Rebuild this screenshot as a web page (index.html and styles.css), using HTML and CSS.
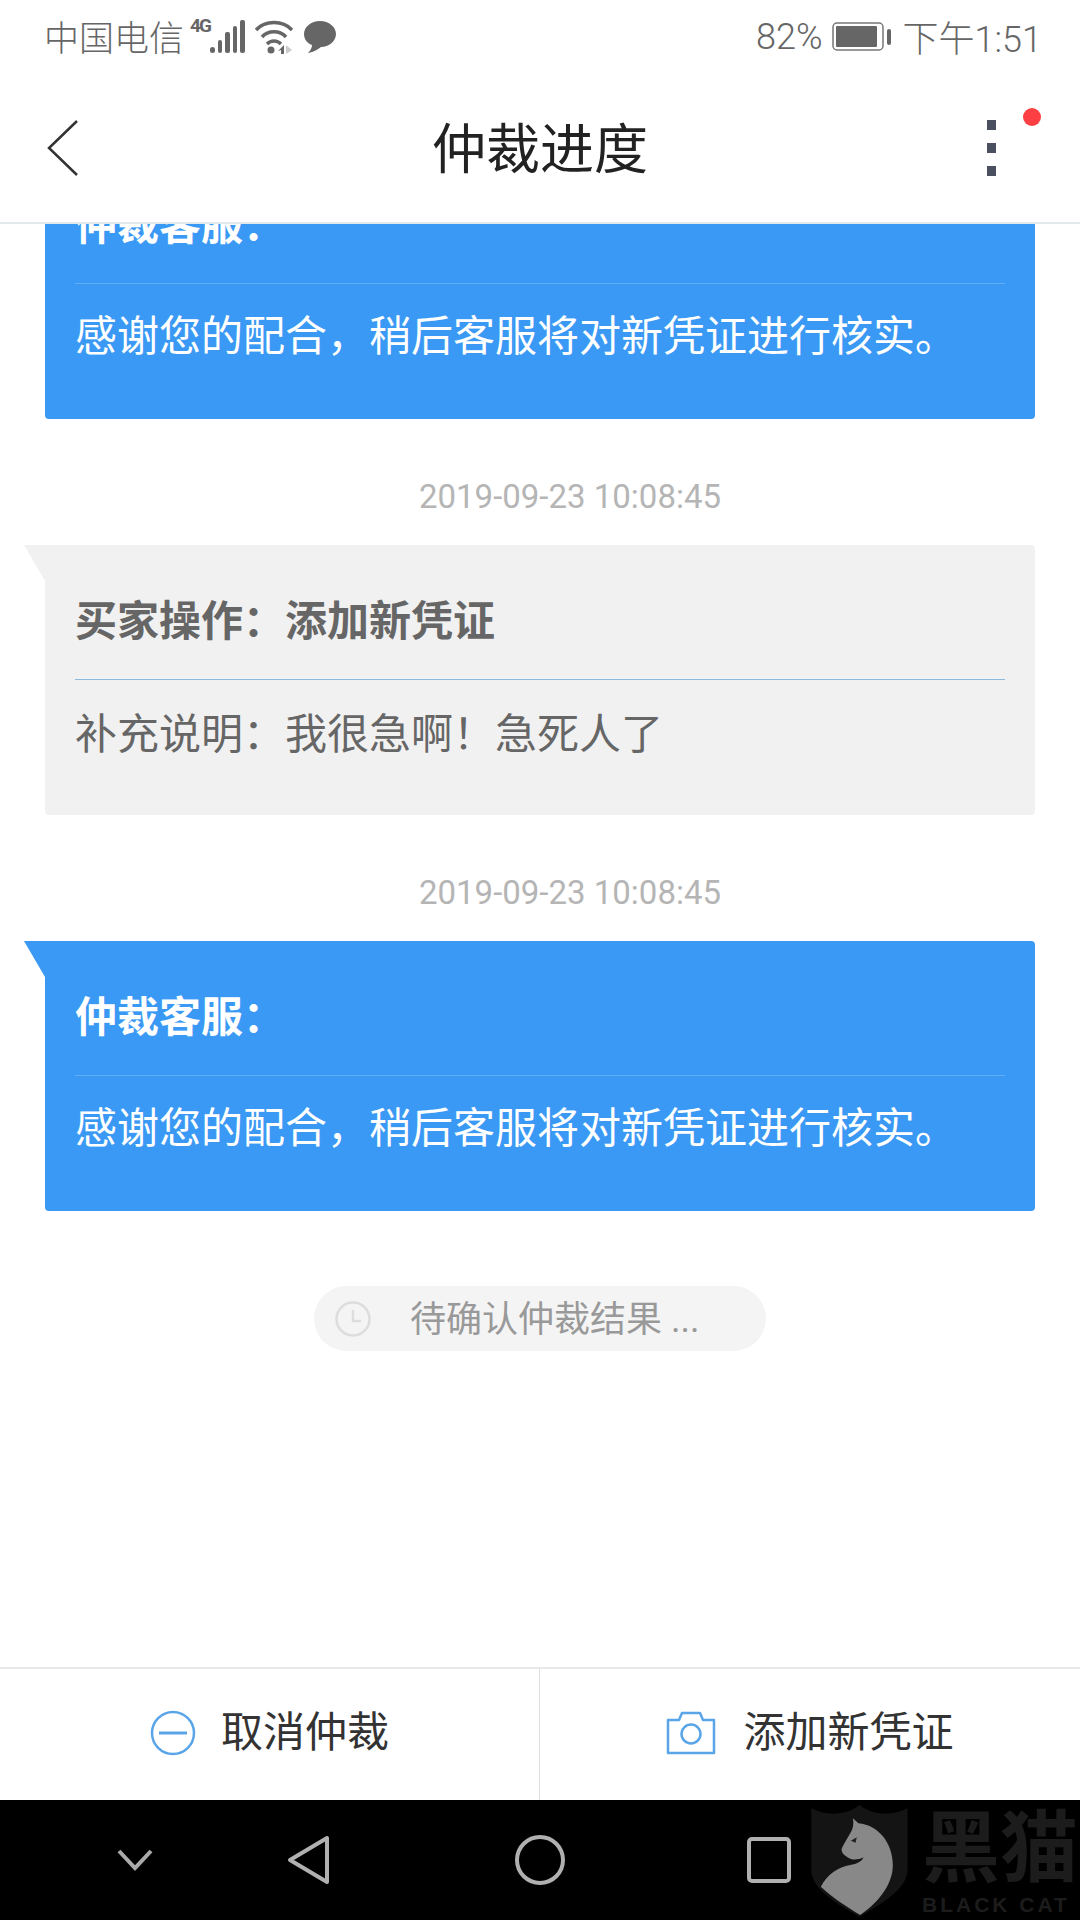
FILE: index.html
```html
<!DOCTYPE html>
<html lang="zh-CN">
<head>
    <meta charset="UTF-8">
    <title>仲裁进度</title>
    <link rel="stylesheet" href="styles.css">
</head>
<body>
    <div class="phone">
        <div class="status-bar">
            <span class="carrier">中国电信</span>
            <span class="net-type">4G</span>
            <svg class="signal" width="35" height="34" viewBox="0 0 35 34">
                <rect x="0" y="27" width="5" height="6" rx="2.5" fill="#666"/>
                <rect x="8" y="20" width="4" height="13" rx="2" fill="#666"/>
                <rect x="15" y="12" width="5" height="21" rx="2" fill="#666"/>
                <rect x="23" y="6" width="4" height="27" rx="2" fill="#666"/>
                <rect x="30" y="0" width="5" height="33" rx="2" fill="#666"/>
            </svg>
            <svg class="wifi" width="38" height="34" viewBox="0 0 38 34">
                <path d="M1 10C10 0 28 0 37 10" fill="none" stroke="#666" stroke-width="3.5"/>
                <path d="M7 17C13 10 25 10 31 17" fill="none" stroke="#666" stroke-width="3.5"/>
                <path d="M12 24C16 20 22 20 26 24" fill="none" stroke="#666" stroke-width="3.5"/>
                <circle cx="16" cy="30" r="3.5" fill="#666"/>
                <path d="M31 25L37 30L31 34Z" fill="#ccc"/>
                <path d="M29 25V34H26V30L23 31Z" fill="#666"/>
            </svg>
            <svg class="bubble" width="34" height="34" viewBox="0 0 34 34">
                <path d="M17 1C26 1 33 7 33 14C33 21 26 27 18 27C15 29 11 32 5 33C7 31 9 28 9 25C4 23 1 19 1 14C1 7 8 1 17 1Z" fill="#666"/>
            </svg>
            <span class="status-right">
                <span class="battery-text">82%</span>
                <svg class="battery" width="60" height="30" viewBox="0 0 60 30">
                    <rect x="1" y="1" width="50" height="27" rx="4" fill="none" stroke="#777" stroke-width="1.5"/>
                    <rect x="4" y="4" width="41" height="21" rx="1" fill="#666"/>
                    <rect x="55" y="7" width="4" height="16" rx="2" fill="#666"/>
                </svg>
                <span class="time">下午1:51</span>
            </span>
        </div>

        <div class="top-bar">
            <svg class="back" width="32" height="56" viewBox="0 0 32 56">
                <path d="M30 1L2 28L30 55" fill="none" stroke="#333" stroke-width="2.5"/>
            </svg>
            <h1 class="page-title">仲裁进度</h1>
            <div class="more">
                <i></i><i></i><i></i>
            </div>
            <span class="red-dot"></span>
        </div>

        <div class="timeline">
            <div class="card card-blue card-first">
                <div class="card-title">仲裁客服：</div>
                <div class="card-text">感谢您的配合，稍后客服将对新凭证进行核实。</div>
            </div>

            <div class="stamp">2019-09-23 10:08:45</div>
            <div class="card card-grey">
                <div class="card-title">买家操作：添加新凭证</div>
                <div class="card-text">补充说明：我很急啊！急死人了</div>
            </div>

            <div class="stamp">2019-09-23 10:08:45</div>
            <div class="card card-blue">
                <div class="card-title">仲裁客服：</div>
                <div class="card-text">感谢您的配合，稍后客服将对新凭证进行核实。</div>
            </div>

            <div class="pending">
                <svg class="clock" width="36" height="36" viewBox="0 0 36 36">
                    <circle cx="18" cy="18" r="16.5" fill="none" stroke="#ddd" stroke-width="2.5"/>
                    <path d="M18 9V20H26" fill="none" stroke="#ddd" stroke-width="2.5"/>
                </svg>
                <span class="pending-text">待确认仲裁结果 ...</span>
            </div>
        </div>

        <div class="actions">
            <div class="action action-left">
                <svg width="46" height="46" viewBox="0 0 46 46">
                    <circle cx="23" cy="23" r="21" fill="none" stroke="#5aa5e8" stroke-width="2.5"/>
                    <path d="M9 23H37" fill="none" stroke="#5aa5e8" stroke-width="3"/>
                </svg>
                <span class="action-text">取消仲裁</span>
            </div>
            <div class="action action-right">
                <svg width="50" height="44" viewBox="0 0 50 44">
                    <path d="M2 9H13L16 2H34L37 9H48V42H2Z" fill="none" stroke="#5aa5e8" stroke-width="2.5" stroke-linejoin="round"/>
                    <circle cx="25" cy="23" r="9.5" fill="none" stroke="#5aa5e8" stroke-width="2.5"/>
                </svg>
                <span class="action-text">添加新凭证</span>
            </div>
        </div>

        <div class="nav-bar">
            <svg class="nav-down" width="36" height="22" viewBox="0 0 36 22">
                <path d="M2 2L18 19L34 2" fill="none" stroke="#aaa" stroke-width="4"/>
            </svg>
            <svg class="nav-back" width="42" height="50" viewBox="0 0 42 50">
                <path d="M40 3V47L3 25Z" fill="none" stroke="#b0b0b0" stroke-width="4" stroke-linejoin="round"/>
            </svg>
            <svg class="nav-home" width="50" height="50" viewBox="0 0 50 50">
                <circle cx="25" cy="25" r="23" fill="none" stroke="#b0b0b0" stroke-width="4"/>
            </svg>
            <svg class="nav-recent" width="44" height="46" viewBox="0 0 44 46">
                <rect x="2" y="2" width="40" height="42" rx="3" fill="none" stroke="#b0b0b0" stroke-width="4"/>
            </svg>
        </div>

        <!-- 水印 -->
        <div class="watermark">
            <svg width="97" height="112" viewBox="33 15 290 336">
                <path d="M33 25C80 50 140 45 178 15C215 45 275 50 322 25V210C322 270 230 320 178 350C125 320 33 270 33 210Z" fill="#141414"/>
                <path d="M158 55L175 70C235 75 278 130 278 195C278 260 225 315 180 345C140 320 100 295 62 260C80 225 115 200 150 195C170 192 185 185 190 172C175 180 155 182 142 172C130 165 122 155 125 145C132 130 142 115 150 100C157 90 162 75 158 55Z" fill="#888"/>
                <path d="M152 122L170 112L166 128Z" fill="#222"/>
            </svg>
            <div class="wm-text">
                <div class="wm-cn">黑猫</div>
                <div class="wm-en">BLACK CAT</div>
            </div>
        </div>
    </div>
</body>
</html>
```

FILE: styles.css
```css
html, body {
    margin: 0;
    padding: 0;
}
body {
    font-family: Roboto, "Noto Sans CJK SC", sans-serif;
    background-color: #fff;
}
.phone {
    position: relative;
    width: 1080px;
    height: 1920px;
    display: flex;
    flex-direction: column;
    overflow: hidden;
}

/* 状态栏 */
.status-bar {
    height: 74px;
    flex-shrink: 0;
    display: flex;
    align-items: center;
    padding: 0 38px 0 44px;
    color: #666;
    font-size: 35px;
    font-weight: 300;
}
.carrier {
    margin-bottom: 3px;
}
.net-type {
    font-size: 19px;
    font-weight: 700;
    letter-spacing: -2px;
    line-height: 20px;
    margin: -22px 0 0 6px;
}
.signal {
    margin-left: 0;
}
.wifi {
    margin-left: 10px;
}
.bubble {
    margin-left: 10px;
}
.status-right {
    margin-left: auto;
    display: flex;
    align-items: center;
    font-size: 36px;
}
.battery {
    margin: 0 11px 0 9px;
}
.time {
    margin-bottom: 3px;
}

/* 标题栏 */
.top-bar {
    position: relative;
    height: 148px;
    flex-shrink: 0;
    display: flex;
    align-items: center;
    justify-content: center;
    border-bottom: 2px solid #e3e8ea;
}
.back {
    position: absolute;
    left: 47px;
    top: 46px;
}
.page-title {
    margin: 0 0 6px 0;
    font-size: 54px;
    font-weight: 400;
    color: #222;
}
.more {
    position: absolute;
    left: 987px;
    top: 46px;
    display: flex;
    flex-direction: column;
    gap: 13px;
}
.more i {
    display: block;
    width: 9px;
    height: 10px;
    background-color: #4a5060;
}
.red-dot {
    position: absolute;
    left: 1023px;
    top: 34px;
    width: 18px;
    height: 18px;
    border-radius: 50%;
    background-color: #fb3f42;
}

/* 进度列表 */
.timeline {
    flex: 1;
    overflow: hidden;
}
.stamp {
    padding: 61px 0 32px 60px;
    text-align: center;
    font-size: 33px;
    line-height: 33px;
    color: #b5b5b5;
}
.card {
    position: relative;
    margin: 0 45px;
    padding: 0 30px;
    border-radius: 4px;
    border-top-left-radius: 0;
}
.card::before {
    content: "";
    position: absolute;
    left: -21px;
    top: 0;
    width: 21px;
    height: 36px;
    clip-path: polygon(0 0, 100% 0, 100% 100%);
}
.card-first {
    margin-top: -75px;
}
.card-title {
    height: 134px;
    box-sizing: border-box;
    padding-top: 50px;
    font-size: 42px;
    line-height: 54px;
    font-weight: 700;
}
.card-text {
    padding: 26px 0 55px 0;
    font-size: 42px;
    line-height: 54px;
    border-top: 1px solid transparent;
}
.card-blue {
    background-color: #3a99f4;
    color: #fff;
}
.card-blue::before {
    background-color: #3a99f4;
}
.card-blue .card-text {
    border-top-color: rgba(255, 255, 255, 0.2);
}
.card-grey {
    background-color: #f1f1f1;
    color: #666;
}
.card-grey::before {
    background-color: #f1f1f1;
}
.card-grey .card-text {
    padding: 28px 0 53px 0;
    border-top-color: #8dbbdf;
}

.pending {
    width: 452px;
    height: 65px;
    margin: 75px auto 0;
    padding-left: 21px;
    box-sizing: border-box;
    display: flex;
    align-items: center;
    gap: 39px;
    border-radius: 33px;
    background-color: #f4f4f4;
    color: #999;
    font-size: 36px;
}
.pending-text {
    margin-bottom: 6px;
}

/* 底部按钮 */
.actions {
    height: 131px;
    flex-shrink: 0;
    display: flex;
    border-top: 2px solid #e8e8e8;
}
.action {
    flex: 1;
    display: flex;
    align-items: center;
    justify-content: center;
    padding-bottom: 4px;
    font-size: 42px;
    color: #333;
}
.action-text {
    margin-bottom: 8px;
}
.action-left {
    flex: 0 0 540px;
    box-sizing: border-box;
    gap: 25px;
    border-right: 1px solid #e0e0e0;
}
.action-right {
    gap: 27px;
}

/* 导航栏 */
.nav-bar {
    height: 120px;
    flex-shrink: 0;
    display: flex;
    align-items: center;
    padding-left: 117px;
    background-color: #000;
}
.nav-back {
    margin-left: 134px;
}
.nav-home {
    margin-left: 186px;
}
.nav-recent {
    margin-left: 182px;
}

.watermark {
    position: absolute;
    left: 811px;
    top: 1805px;
    display: flex;
    gap: 14px;
}
.wm-text {
    width: 158px;
    overflow: hidden;
    color: #1c1c1c;
    font-family: "Liberation Sans", "Noto Sans CJK SC", sans-serif;
    font-weight: 700;
}
.wm-cn {
    font-size: 78px;
    line-height: 88px;
    white-space: nowrap;
}
.wm-en {
    font-size: 21px;
    line-height: 24px;
    letter-spacing: 3px;
    white-space: nowrap;
}
```
